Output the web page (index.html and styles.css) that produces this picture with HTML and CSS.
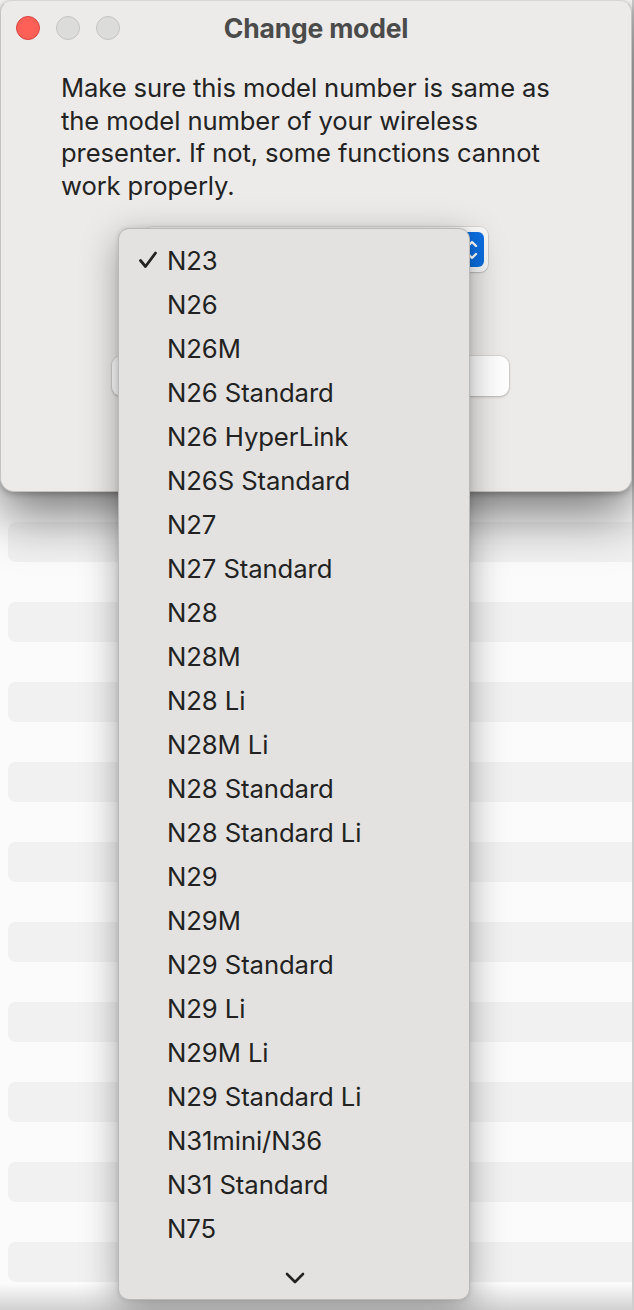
FILE: index.html
```html
<!DOCTYPE html>
<html>
<head>
<meta charset="utf-8">
<link rel="stylesheet" href="styles.css">
</head>
<body>
<div class="screen">
  <div class="window">
    <div class="titlebar">
      <div class="lights">
        <span class="light red"></span>
        <span class="light gray"></span>
        <span class="light gray"></span>
      </div>
      <div class="title">Change model</div>
    </div>
    <p class="message">Make sure this model number is same as<br>the model number of your wireless<br>presenter. If not, some functions cannot<br>work properly.</p>
    <div class="popup-row">
      <div class="popup">
        <span class="popup-arrows">
          <svg width="14" height="26" viewBox="0 0 14 26"><path d="M3 9 L7 5 L11 9 M3 17 L7 21 L11 17" fill="none" stroke="#fff" stroke-width="2.4" stroke-linecap="round" stroke-linejoin="round"/></svg>
        </span>
      </div>
    </div>
    <div class="field-row">
      <div class="field"></div>
    </div>
  </div>
  <div class="stripes">
    <div class="stripe"></div>
    <div class="stripe"></div>
    <div class="stripe"></div>
    <div class="stripe"></div>
    <div class="stripe"></div>
    <div class="stripe"></div>
    <div class="stripe"></div>
    <div class="stripe"></div>
    <div class="stripe"></div>
    <div class="stripe"></div>
  </div>
  <div class="bottom-shade"></div>

  <div class="menu">
    <ul class="items">
      <li class="item checked"><svg class="check" width="20" height="18" viewBox="0 0 20 18"><path d="M2.5 9.5 L7.5 15.5 L17.5 2" fill="none" stroke="#222" stroke-width="2.8" stroke-linecap="round" stroke-linejoin="round"/></svg>N23</li>
      <li class="item">N26</li>
      <li class="item">N26M</li>
      <li class="item">N26 Standard</li>
      <li class="item">N26 HyperLink</li>
      <li class="item">N26S Standard</li>
      <li class="item">N27</li>
      <li class="item">N27 Standard</li>
      <li class="item">N28</li>
      <li class="item">N28M</li>
      <li class="item">N28 Li</li>
      <li class="item">N28M Li</li>
      <li class="item">N28 Standard</li>
      <li class="item">N28 Standard Li</li>
      <li class="item">N29</li>
      <li class="item">N29M</li>
      <li class="item">N29 Standard</li>
      <li class="item">N29 Li</li>
      <li class="item">N29M Li</li>
      <li class="item">N29 Standard Li</li>
      <li class="item">N31mini/N36</li>
      <li class="item">N31 Standard</li>
      <li class="item">N75</li>
    </ul>
    <div class="scroll-down">
      <svg width="20" height="12" viewBox="0 0 20 12"><path d="M2 2 L10 10 L18 2" fill="none" stroke="#222" stroke-width="2.6" stroke-linecap="round" stroke-linejoin="round"/></svg>
    </div>
  </div>
</div>
</body>
</html>
```
FILE: styles.css
```css
* { box-sizing: border-box; }
html, body { margin: 0; padding: 0; }
body {
  font-family: Inter, "Noto Sans", "Liberation Sans", sans-serif;
  background: #fbfbfb;
  width: 634px;
  height: 1310px;
  overflow: hidden;
}
.screen {
  position: relative;
  width: 634px;
  height: 1310px;
  border-right: 2px solid #cfcfcf;
  background: #fbfbfb;
}
.window {
  position: relative;
  z-index: 1;
  width: 632px;
  height: 492px;
  background: #ecebe9;
  border: 1px solid #c4c4c4;
  border-top-color: #d6d6d6;
  border-radius: 12px 12px 14px 14px;
  box-shadow: 0 24px 50px rgba(0, 0, 0, 0.5), 0 2px 6px rgba(0, 0, 0, 0.25);
  overflow: hidden;
}
.titlebar {
  position: relative;
  height: 56px;
  display: flex;
  align-items: center;
  justify-content: center;
}
.lights {
  position: absolute;
  left: 15px;
  top: 15px;
  display: flex;
  gap: 16px;
}
.light {
  width: 24px;
  height: 24px;
  border-radius: 50%;
}
.light.red { background: #fe5f57; border: 1px solid #e0443e; }
.light.gray { background: #dcdcdb; border: 1px solid #c5c5c4; }
.title {
  font-weight: 700;
  font-size: 26.5px;
  color: #4b4b4b;
  letter-spacing: -0.2px;
  margin-top: -2px;
}
.message {
  margin: 15px 0 0 0;
  padding-left: 60px;
  font-size: 25.6px;
  line-height: 32.5px;
  color: #232323;
  letter-spacing: -0.1px;
}
.popup-row {
  display: flex;
  justify-content: flex-end;
  padding-right: 143px;
  margin-top: 25px;
}
.popup {
  width: 344px;
  height: 45px;
  background: #fafafa;
  border-radius: 8px;
  box-shadow: 0 0 0 1px rgba(0,0,0,0.08), 0 1px 2px rgba(0,0,0,0.15);
  display: flex;
  align-items: center;
  justify-content: flex-end;
  padding: 0 4px 0 14px;
}
.popup-arrows {
  width: 24px;
  height: 35px;
  background: #0b6fe2;
  border-radius: 6px;
  display: flex;
  align-items: center;
  justify-content: center;
}
.field-row {
  display: flex;
  padding-left: 111px;
  margin-top: 84px;
}
.field {
  width: 397px;
  height: 40px;
  background: #fefefe;
  border-radius: 9px;
  box-shadow: 0 0 0 1px rgba(0,0,0,0.06), 0 1px 3px rgba(0,0,0,0.2);
}
.stripes {
  padding-left: 8px;
  padding-top: 30px;
  display: flex;
  flex-direction: column;
  gap: 40px;
}
.stripe {
  height: 40px;
  background: #f0f1f0;
  border-radius: 8px 0 0 8px;
}
.bottom-shade {
  position: absolute;
  left: 0;
  right: 0;
  bottom: 0;
  height: 26px;
  background: linear-gradient(to bottom, rgba(0,0,0,0), rgba(0,0,0,0.17));
}
.menu {
  position: absolute;
  z-index: 2;
  left: 118px;
  top: 228px;
  width: 352px;
  height: 1072px;
  background: #e3e2e0;
  border: 1px solid #b9b9b9;
  border-radius: 11px;
  box-shadow: 0 10px 36px rgba(0, 0, 0, 0.34), 0 0 5px rgba(0,0,0,0.12);
  padding-top: 9px;
  font-size: 25.7px;
  color: #222;
}
.items {
  list-style: none;
  margin: 0;
  padding: 0;
}
.item {
  position: relative;
  height: 44px;
  display: flex;
  align-items: center;
  padding-left: 48px;
  letter-spacing: -0.1px;
}
.check {
  position: absolute;
  left: 19px;
  top: 13px;
}
.scroll-down {
  display: flex;
  justify-content: center;
  padding-top: 22px;
  padding-left: 2px;
}
```
